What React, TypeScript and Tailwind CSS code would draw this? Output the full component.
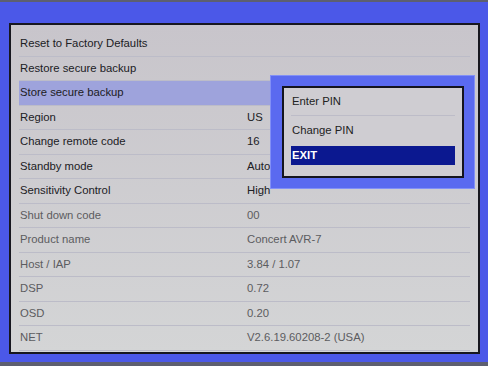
import React from 'react';

const rows: { label: string; value?: string; dim?: boolean; active?: boolean }[] = [
  { label: 'Reset to Factory Defaults' },
  { label: 'Restore secure backup' },
  { label: 'Store secure backup', active: true },
  { label: 'Region', value: 'US' },
  { label: 'Change remote code', value: '16' },
  { label: 'Standby mode', value: 'Auto' },
  { label: 'Sensitivity Control', value: 'High' },
  { label: 'Shut down code', value: '00', dim: true },
  { label: 'Product name', value: 'Concert AVR-7', dim: true },
  { label: 'Host / IAP', value: '3.84 / 1.07', dim: true },
  { label: 'DSP', value: '0.72', dim: true },
  { label: 'OSD', value: '0.20', dim: true },
  { label: 'NET', value: 'V2.6.19.60208-2 (USA)', dim: true },
];

function PinMenu() {
  return (
    <div className="absolute left-[270px] top-[73px] w-[205px] h-[114px] bg-[#5a6af0] border border-[#8290f6] p-[10px_10px_10px_11px]">
      <div className="h-full border-2 border-[#14141e] bg-[#cfcdd2] px-[7px]">
        <div className="h-[28px] flex items-center pl-[1px] border-b border-[#bdbcc8] text-[#222]">Enter PIN</div>
        <div className="h-[28px] flex items-center pl-[1px] text-[#222]">Change PIN</div>
        <div className="mt-[2px] h-[19px] flex items-center pl-[1px] bg-[#0b1890] text-white font-semibold">EXIT</div>
      </div>
    </div>
  );
}

export default function App() {
  return (
    <div
      className="relative w-[488px] h-[366px] overflow-hidden bg-[#4b58e8] border-t-2 border-b-4 border-[#5d5f70] pt-[21px] pl-[9px] text-[11.3px]"
      style={{ fontFamily: '"Liberation Sans", Arial, sans-serif' }}
    >
      <div className="w-[471px] h-[331px] border-2 border-[#17171f] bg-gradient-to-b from-[#c8c5cb] to-[#d4d5d6] pt-[7px] pl-[8px] pr-[8px]">
        {rows.map((r) => (
          <div
            key={r.label}
            className={`h-[24.5px] flex items-center border-b border-[#bcbcc8] ${r.active ? 'bg-[#9ea3dc]' : ''} ${r.dim ? 'text-[#5c5c60]' : 'text-[#202024]'}`}
          >
            <span className="w-[228px] pl-[1px]">{r.label}</span>
            {r.value && <span>{r.value}</span>}
          </div>
        ))}
      </div>
      <PinMenu />
    </div>
  );
}
